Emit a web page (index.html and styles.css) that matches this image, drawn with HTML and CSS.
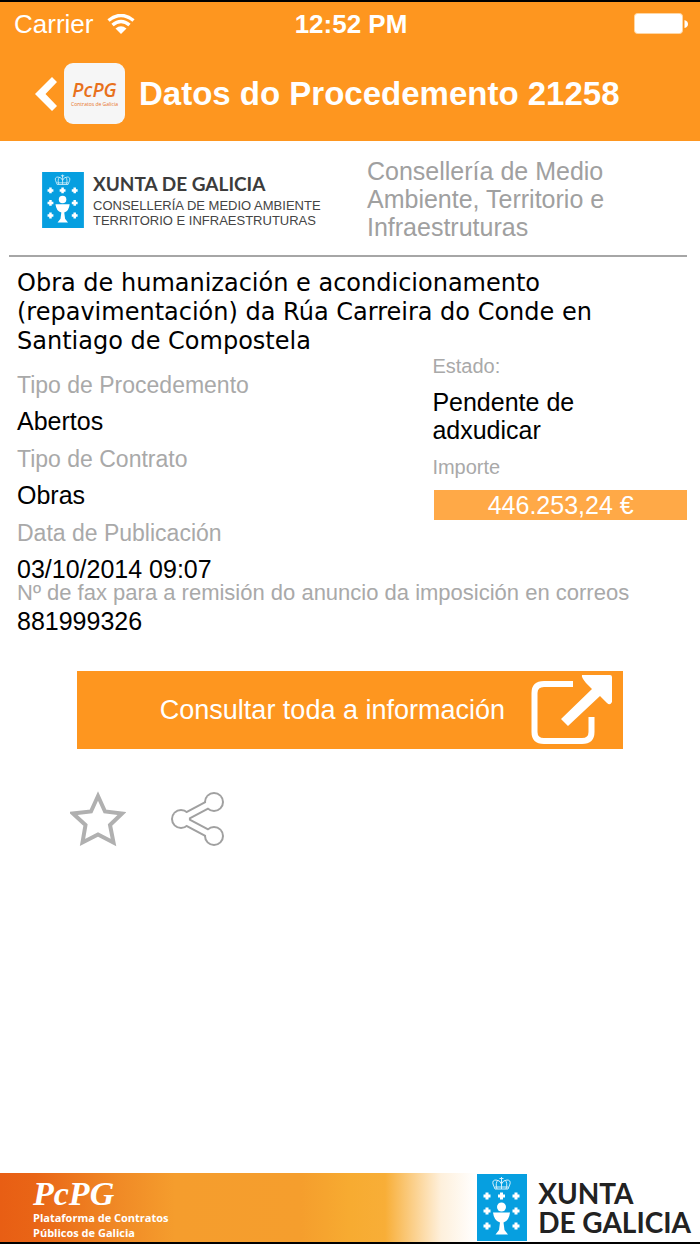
FILE: index.html
```
<!DOCTYPE html>
<html lang="gl">
<head>
  <meta charset="UTF-8">
  <title>Datos do Procedemento 21258</title>
  <meta name="viewport" content="width=device-width, initial-scale=1">
  <link rel="stylesheet" href="styles.css">
</head>
<body>

  <svg class="defs" aria-hidden="true">
    <symbol id="escudo" viewBox="0 0 50 67">
      <rect width="50" height="67" fill="#069fe0"/>
      <g fill="none" stroke="#d4effb" stroke-width="1">
        <path d="M18 15 L16 10 Q15 6 19 6 Q23 6 24.500 10 Q26 6 30 6 Q34 6 33 10 L31 15 Z"/>
        <path d="M20 15 Q18 9 21 6 M29 15 Q31 9 28 6 M24.500 5 V15 M22.500 4.500 H26.500 M24.500 3 V6 M18 13 H31"/>
      </g>
      <path id="cruz" d="M8.500 18.500 h3 v2 h2 v3 h-2 v2 h-3 v-2 h-2 v-3 h2 z" fill="#fff"/>
      <use href="#cruz" x="14.500"/>
      <use href="#cruz" x="29"/>
      <use href="#cruz" y="15"/>
      <use href="#cruz" x="29" y="15"/>
      <use href="#cruz" y="30"/>
      <use href="#cruz" x="29" y="30"/>
      <circle cx="24.500" cy="33" r="4.500" fill="#fff"/>
      <path d="M16 38.500 H33 Q32 47 26.500 48.500 L27.500 56 L31 60.500 H18.500 L22 56 L23 48.500 Q17 47 16 38.500 Z" fill="#fff"/>
    </symbol>
  </svg>

  <header class="cabeceira">
    <div class="estado-dispositivo">
      <div class="operador">
        <span>Carrier</span>
        <svg width="28" height="20" viewBox="0 0 28 20" aria-hidden="true">
          <path d="M1.500 6.500 Q14 -3.500 26.500 6.500" fill="none" stroke="#fff" stroke-width="3.500"/>
          <path d="M5.500 11 Q14 4 22.500 11" fill="none" stroke="#fff" stroke-width="3.500"/>
          <path d="M8.500 14.500 Q14 10 19.500 14.500 L14 20 Z" fill="#fff"/>
        </svg>
      </div>
      <span class="hora">12:52 PM</span>
      <svg class="bateria" width="54" height="22" viewBox="0 0 54 22" aria-hidden="true">
        <rect x="0.500" y="0.500" width="48" height="20" rx="3" fill="#fff" stroke="#ffd6a3"/>
        <path d="M50.500 7 Q54 8 54 11 Q54 14 50.500 15 Z" fill="#fff"/>
      </svg>
    </div>
    <div class="navegacion">
      <button class="volver" type="button" aria-label="Volver">
        <svg width="22" height="34" viewBox="0 0 22 34" aria-hidden="true">
          <path d="M17 0 L22 5 L10.500 17 L22 29 L17 34 L0 17 Z" fill="#fff"/>
        </svg>
      </button>
      <div class="icona-app">
        <span class="icona-nome">PcPG</span>
        <span class="icona-texto">Contratos de Galicia</span>
      </div>
      <h1>Datos do Procedemento 21258</h1>
    </div>
  </header>

  <main>
    <section class="organismo">
      <div class="logo-organismo">
        <svg width="42" height="56" aria-hidden="true"><use href="#escudo"/></svg>
        <div>
          <p class="logo-nome">XUNTA DE GALICIA</p>
          <p class="logo-detalle">CONSELLERÍA DE MEDIO AMBIENTE<br>TERRITORIO E INFRAESTRUTURAS</p>
        </div>
      </div>
      <p class="conselleria">Consellería de Medio Ambiente, Territorio e Infraestruturas</p>
    </section>

    <section class="procedemento">
      <h2>Obra de humanización e acondicionamento (repavimentación) da Rúa Carreira do Conde en Santiago de Compostela</h2>

      <div class="columnas">
        <dl class="datos">
          <div>
            <dt>Tipo de Procedemento</dt>
            <dd>Abertos</dd>
          </div>
          <div>
            <dt>Tipo de Contrato</dt>
            <dd>Obras</dd>
          </div>
          <div>
            <dt>Data de Publicación</dt>
            <dd>03/10/2014 09:07</dd>
          </div>
        </dl>
        <dl class="resumo">
          <dt>Estado:</dt>
          <dd>Pendente de adxudicar</dd>
          <dt>Importe</dt>
          <dd class="importe">446.253,24 €</dd>
        </dl>
      </div>

      <dl class="fax">
        <dt>Nº de fax para a remisión do anuncio da imposición en correos</dt>
        <dd>881999326</dd>
      </dl>
    </section>

    <a class="consultar" href="#">
      <span>Consultar toda a información</span>
      <svg width="82" height="70" viewBox="0 0 82 70" aria-hidden="true">
        <path d="M42 9 H13 Q3.500 9 3.500 18 V57 Q3.500 66 13 66 H51 Q60.500 66 60.500 57 V42" fill="none" stroke="#fff" stroke-width="6"/>
        <path d="M51 0 H79 Q81 0 81 2 V27 Q79 31 76 28 L69 21 L37 51 L30 44 L61 14 L55 8 Q50 2 51 0 Z" fill="#fff"/>
      </svg>
    </a>

    <div class="accions">
      <button type="button" aria-label="Engadir a favoritos">
        <svg width="56" height="56" viewBox="0 0 56 56" aria-hidden="true">
          <path d="M28 5 L35 20.500 L52 22.500 L40 34 L43.500 51.500 L28 43.500 L12.500 51.500 L15.500 34 L3 22.500 L21 20.500 Z" fill="none" stroke="#b0b0b0" stroke-width="4"/>
        </svg>
      </button>
      <button type="button" aria-label="Compartir">
        <svg width="56" height="56" viewBox="0 0 56 56" aria-hidden="true">
          <path d="M43 11 L11 28 L43 45" fill="none" stroke="#a0a0a0" stroke-width="9"/>
          <g fill="#a0a0a0">
            <circle cx="11" cy="28" r="10"/>
            <circle cx="44" cy="11" r="10"/>
            <circle cx="44" cy="45" r="10"/>
          </g>
          <path d="M43 11 L11 28 L43 45" fill="none" stroke="#fff" stroke-width="5"/>
          <g fill="#fff">
            <circle cx="11" cy="28" r="8"/>
            <circle cx="44" cy="11" r="8"/>
            <circle cx="44" cy="45" r="8"/>
          </g>
        </svg>
      </button>
    </div>
  </main>

  <footer class="pe">
    <div class="marca">
      <p class="marca-nome">PcPG</p>
      <p class="marca-texto">Plataforma de Contratos<br>Públicos de Galicia</p>
    </div>
    <div class="xunta">
      <svg width="50" height="67" aria-hidden="true"><use href="#escudo"/></svg>
      <p>XUNTA<br>DE GALICIA</p>
    </div>
  </footer>

</body>
</html>
```
FILE: styles.css
```
* {
  box-sizing: border-box;
}
body {
  margin: 0;
  min-height: 100vh;
  display: flex;
  flex-direction: column;
  font-family: "Liberation Sans", Arial, sans-serif;
  font-size: 25px;
  line-height: 28px;
  background-color: #fff;
  color: #000;
}
h1, h2, p, dl, dd {
  margin: 0;
}
svg {
  display: block;
  flex-shrink: 0;
}
button {
  padding: 0;
  border: none;
  background: none;
  cursor: pointer;
}
.defs {
  position: absolute;
  width: 0;
  height: 0;
}

/* cabeceira */
.cabeceira {
  border-top: 2px solid #000;
  background-color: #fe961f;
  color: #fff;
}
.estado-dispositivo {
  display: grid;
  grid-template-columns: 1fr auto 1fr;
  align-items: center;
  height: 44px;
  padding: 0 12px 0 14px;
  font-size: 26px;
}
.operador {
  display: flex;
  align-items: center;
  gap: 14px;
}
.hora {
  font-weight: bold;
}
.bateria {
  justify-self: end;
}
.navegacion {
  display: flex;
  align-items: center;
  height: 95px;
  padding: 0 35px;
}
.volver {
  margin-right: 7px;
}
.icona-app {
  display: flex;
  flex-direction: column;
  align-items: center;
  justify-content: center;
  width: 61px;
  height: 61px;
  margin-right: 14px;
  border-radius: 9px;
  background-color: #f6f6f6;
  color: #e8711c;
  font-family: "Open Sans", sans-serif;
}
.icona-nome {
  font-size: 19px;
  font-style: italic;
  font-weight: 600;
  line-height: 20px;
}
.icona-texto {
  font-size: 5px;
  line-height: 8px;
}
h1 {
  font-size: 33px;
  line-height: 40px;
}

/* organismo */
.organismo {
  display: grid;
  grid-template-columns: 358fr 320fr;
  align-items: center;
  margin: 0 13px 0 9px;
  padding: 16px 0 14px;
  border-bottom: 2px solid #a6a6a6;
}
.logo-organismo {
  display: flex;
  align-items: center;
  gap: 9px;
  padding: 2px 0 0 33px;
}
.logo-nome {
  font-family: Lato, sans-serif;
  font-size: 19px;
  font-weight: bold;
  line-height: 24px;
  color: #3c3c3c;
}
.logo-detalle {
  padding-top: 2px;
  font-size: 13px;
  line-height: 15px;
  white-space: nowrap;
  color: #444;
}
.conselleria {
  padding-right: 48px;
  color: #a0a0a0;
}

/* procedemento */
.procedemento {
  padding: 12px 13px 0 17px;
}
h2 {
  font-family: "DejaVu Sans", Verdana, sans-serif;
  font-size: 24px;
  font-weight: normal;
  line-height: 29px;
}
dt {
  color: #a9a9a9;
}
.columnas {
  display: grid;
  grid-template-columns: 62% 38%;
}
.datos {
  display: grid;
  gap: 2px;
  padding-top: 11px;
  line-height: 36px;
}
.datos dt {
  font-size: 23px;
}
.resumo dt {
  font-size: 20px;
  line-height: 20px;
}
.resumo dd {
  padding: 12px 80px 13px 0;
}
.resumo .importe {
  margin: 13px 0 0 2px;
  padding: 0;
  line-height: 30px;
  text-align: center;
  background-color: #ffa947;
  color: #fff;
}
.fax {
  margin-top: -6px;
}
.fax dt {
  font-size: 22px;
  line-height: 24px;
}
.fax dd {
  line-height: 32px;
}

.consultar {
  display: flex;
  align-items: center;
  justify-content: flex-end;
  gap: 26px;
  min-height: 78px;
  margin: 34px 11% 0;
  padding-right: 10px;
  background-color: #fe961f;
  color: #fff;
  font-size: 27px;
  text-decoration: none;
}
.accions {
  display: flex;
  gap: 44px;
  margin: 42px 10% 0;
}

/* pe */
.pe {
  display: flex;
  justify-content: space-between;
  align-items: center;
  height: 71px;
  margin-top: auto;
  border-bottom: 2px solid #000;
  background: linear-gradient(to right, #e85e14 0%, #e96516 5%, #f08a26 17%, #f59d2d 25%, #f59e2d 43%, #f7ab31 50%, #f8ae37 55%, #fef0dc 63%, #fff 68%);
}
.marca {
  padding: 2px 0 0 33px;
  color: #fff;
}
.marca-nome {
  font-family: "Liberation Serif", serif;
  font-size: 34px;
  font-style: italic;
  font-weight: bold;
  line-height: 32px;
}
.marca-texto {
  font-family: "Open Sans", sans-serif;
  font-size: 11px;
  font-weight: bold;
  line-height: 15px;
}
.xunta {
  display: flex;
  align-items: center;
  gap: 11px;
  padding-right: 9px;
}
.xunta p {
  font-family: Lato, sans-serif;
  font-size: 28px;
  font-weight: bold;
  line-height: 29px;
  color: #222;
}
```
